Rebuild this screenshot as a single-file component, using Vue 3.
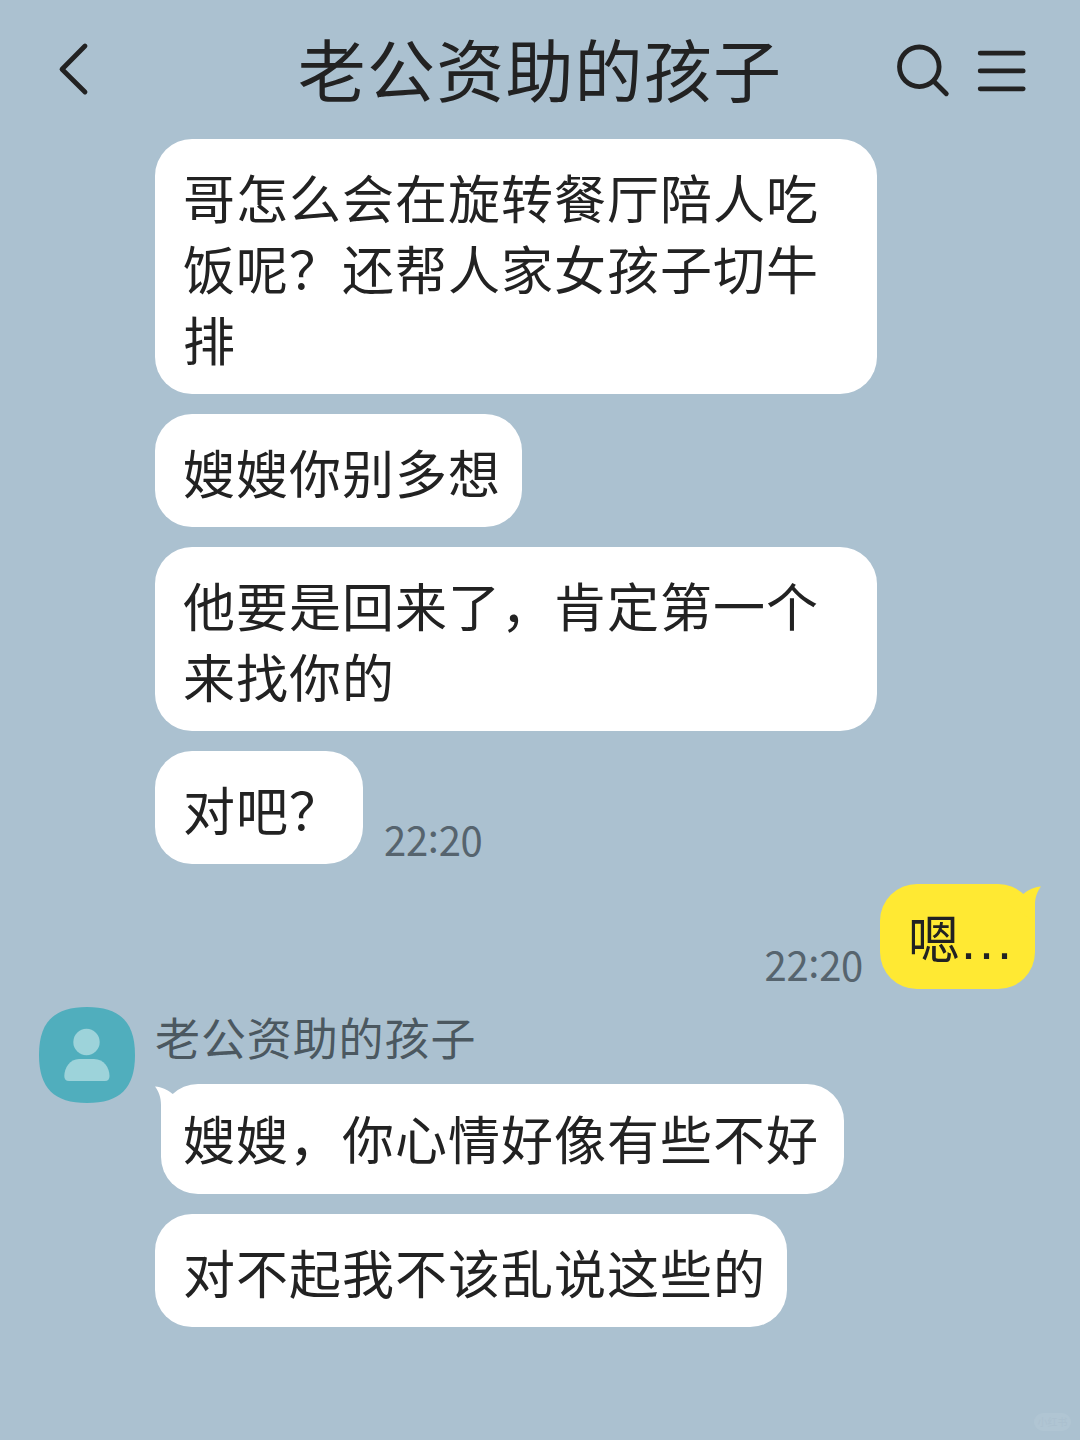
<template>
    <div class="chat">
        <header class="bar">
            <svg class="back" viewBox="0 0 40 60" width="40" height="60">
                <path d="M30 6 L7 29.2 L30 52" />
            </svg>
            <h1 class="title">{{ contact }}</h1>
            <div class="actions">
                <svg viewBox="0 0 60 60" width="60" height="60">
                    <circle cx="27.3" cy="26.8" r="19.8" />
                    <path d="M41.5 41 L54.3 53.8" />
                </svg>
                <svg class="menu" viewBox="0 0 52 60" width="52" height="60">
                    <path d="M4.2 13.2 H47.2 M4.2 30.9 H47.2 M4.2 48.8 H47.2" />
                </svg>
            </div>
        </header>

        <main class="messages">
            <div v-for="(msg, idx) in messages" :key="idx" class="row" :class="{ mine: msg.mine, first: msg.first }">
                <div v-if="msg.first" class="avatar">
                    <svg viewBox="0 0 96 96" width="96" height="96">
                        <path class="avatar-bg"
                            d="M48 0 C81 0 96 15 96 48 C96 81 81 96 48 96 C15 96 0 81 0 48 C0 15 15 0 48 0 Z" />
                        <circle class="avatar-fg" cx="47.5" cy="35" r="13.2" />
                        <path class="avatar-fg"
                            d="M40 52 H55 C65 52 70.5 61 70.5 69 Q70.5 74 66 74 H30 Q25.3 74 25.3 69 C25.3 61 31 52 40 52 Z" />
                    </svg>
                </div>
                <div class="content">
                    <div v-if="msg.first" class="name">{{ contact }}</div>
                    <div class="line">
                        <div class="bubble" :class="{ tailed: msg.first }">
                            <svg v-if="msg.first || msg.mine" class="tail" viewBox="0 0 40 40" width="40" height="40">
                                <path d="M0 2.5 C7 3 12 5.5 17 9.5 L34 20 L6 38 V21 C6 13 3.5 7 0 2.5 Z" />
                            </svg>
                            <span>{{ msg.text }}</span><span v-if="msg.dots" class="dots">{{ msg.dots }}</span>
                        </div>
                        <div v-if="msg.time" class="time">
                            {{ msg.time[0] }}<span class="colon">:</span>{{ msg.time[1] }}
                        </div>
                    </div>
                </div>
            </div>
        </main>

        <div class="mark"><span>小红书</span></div>
    </div>
</template>

<script setup>
const contact = '老公资助的孩子'

const messages = [
    { text: '哥怎么会在旋转餐厅陪人吃饭呢？还帮人家女孩子切牛排' },
    { text: '嫂嫂你别多想' },
    { text: '他要是回来了，肯定第一个来找你的' },
    { text: '对吧？', time: ['22', '20'] },
    { text: '嗯', dots: '...', time: ['22', '20'], mine: true },
    { text: '嫂嫂，你心情好像有些不好', first: true },
    { text: '对不起我不该乱说这些的' },
]
</script>

<style>
body {
    margin: 0;
    background: #abc1d0;
}
</style>

<style scoped>
.chat {
    position: relative;
    box-sizing: border-box;
    width: 1080px;
    height: 1440px;
    overflow: hidden;
    background: #abc1d0;
    color: #222;
    font-family: "Noto Sans CJK SC", "Noto Sans", sans-serif;
}

.bar {
    display: grid;
    grid-template-columns: 240px 1fr 240px;
    align-items: center;
    box-sizing: border-box;
    height: 139.4px;
}

.bar svg {
    fill: none;
    stroke: #222;
    stroke-width: 4.8;
    stroke-linecap: round;
    stroke-linejoin: round;
}

.back {
    margin-left: 55px;
}

.title {
    margin: 0;
    padding-bottom: 3px;
    font-size: 68px;
    font-weight: 400;
    line-height: 100px;
    letter-spacing: 1.2px;
    text-align: center;
    white-space: nowrap;
}

.actions {
    display: flex;
    gap: 24px;
    margin-left: 52px;
}

.messages {
    display: flex;
    flex-direction: column;
    gap: 20px;
}

.row {
    display: flex;
    padding-left: 155.4px;
}

.row.first {
    padding-left: 39px;
    gap: 20px;
    margin-top: -2px;
}

.line {
    display: flex;
    align-items: flex-end;
    gap: 21.5px;
}

.bubble {
    position: relative;
    box-sizing: border-box;
    max-width: 722px;
    padding: 22px 20.5px 20px 27.6px;
    border-radius: 37px;
    background: #fff;
    font-size: 52px;
    line-height: 71px;
    letter-spacing: 1px;
}

.bubble.tailed {
    margin-left: 6px;
    padding: 17.5px 25px 21.5px 22px;
}

.tail {
    position: absolute;
    top: 0;
    left: -6px;
    fill: #fff;
}

.mine {
    justify-content: flex-end;
    padding: 0 45px 0 0;
}

.mine .line {
    flex-direction: row-reverse;
    gap: 17.5px;
}

.mine .bubble {
    padding: 17px 20px 17px 27.5px;
    background: #ffe933;
}

.mine .tail {
    left: auto;
    right: -6px;
    transform: scaleX(-1);
    fill: #ffe933;
}

.dots {
    font-family: "Liberation Sans", sans-serif;
    font-size: 54px;
    line-height: 1;
    letter-spacing: 3px;
}

.time {
    padding-bottom: 5px;
    color: #56646e;
    font-size: 40px;
    line-height: 40px;
    letter-spacing: -0.3px;
}

.colon {
    position: relative;
    top: -4px;
}

.avatar {
    width: 96px;
    height: 96px;
}

.avatar-bg {
    fill: #50aebd;
}

.avatar-fg {
    fill: #9dd3da;
}

.name {
    height: 77px;
    color: #4b5860;
    font-size: 45px;
    line-height: 60px;
    letter-spacing: 0.9px;
}

.mark {
    position: absolute;
    right: 9px;
    bottom: 9px;
    width: 37px;
    height: 18px;
    border-radius: 9px;
    background: #b0c5d3;
    color: #abc0cf;
    font-size: 10px;
    line-height: 18px;
    text-align: center;
}
</style>
